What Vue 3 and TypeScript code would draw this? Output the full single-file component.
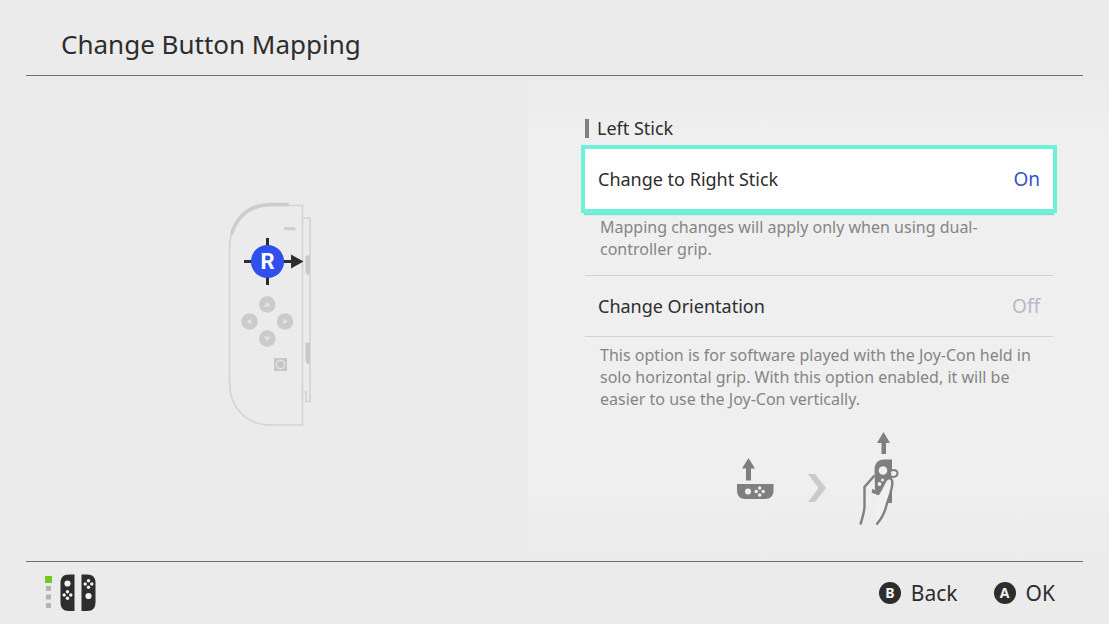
<script setup lang="ts">
import { ref } from 'vue'

interface Option {
  id: string
  label: string
  on: boolean
  lines: string[]
}

const selected = ref('stick')
const options = ref<Option[]>([
  {
    id: 'stick',
    label: 'Change to Right Stick',
    on: true,
    lines: ['Mapping changes will apply only when using dual-', 'controller grip.'],
  },
  {
    id: 'orientation',
    label: 'Change Orientation',
    on: false,
    lines: [
      'This option is for software played with the Joy-Con held in',
      'solo horizontal grip. With this option enabled, it will be',
      'easier to use the Joy-Con vertically.',
    ],
  },
])

function toggle(option: Option) {
  selected.value = option.id
  option.on = !option.on
}
</script>

<template>
  <div class="screen">
    <header class="header">
      <h1>Change Button Mapping</h1>
    </header>

    <main class="main">
      <section class="preview">
        <svg class="controller" viewBox="214 199 100 240" role="img" aria-label="Left Joy-Con">
          <g fill="none" stroke="#d3d3d3" stroke-width="1.6">
            <path d="M302.5 205.5H272C246 205.5 229.500 223 229.500 248V382C229.500 408 246 425 272 425H302.500Z" />
            <path d="M302.500 218H310V401.500H306V392H302.500" />
          </g>
          <path d="M231.500 234C238 214 252 204.500 272 204.500H289" fill="none" stroke="#cdcdcd" stroke-width="3.500" />
          <path d="M284 228.700H295.500" stroke="#cdcdcd" stroke-width="3" />
          <path d="M306 256H309.500V272L308 275L306 272ZM306 343H309.500V361L308 364L306 361Z" fill="#c8c8c8" stroke="#c8c8c8" stroke-width="1" />
          <g fill="#cbcbcb">
            <circle cx="267.300" cy="304.500" r="8.300" />
            <circle cx="249.500" cy="321.500" r="8.300" />
            <circle cx="285" cy="321.500" r="8.300" />
            <circle cx="267.300" cy="338.500" r="8.300" />
          </g>
          <g fill="#e2e2e2">
            <path d="M267.300 301.500L270.500 306.500H264Z" />
            <path d="M246.500 321.500L251.500 318.500V324.500Z" />
            <path d="M288 321.500L283 318.500V324.500Z" />
            <path d="M267.300 341.500L270.500 336.500H264Z" />
          </g>
          <rect x="274" y="358" width="13" height="13" fill="#c6c6c6" />
          <circle cx="280.500" cy="364.500" r="4.200" fill="#c6c6c6" stroke="#e2e2e2" stroke-width="1.400" />
          <path d="M267.500 238V285M244 261.500H293" stroke="#2d2d2d" stroke-width="3" />
          <path d="M291 254.500L303.500 261.500L291 268.500Z" fill="#2d2d2d" />
          <circle cx="267.500" cy="261.500" r="16.600" fill="#3050eb" />
          <text x="267.500" y="269" class="stick-letter">R</text>
        </svg>
      </section>

      <section class="panel">
        <h2>Left Stick</h2>
        <template v-for="option in options" :key="option.id">
          <button
            type="button"
            class="row"
            :class="{ selected: selected === option.id }"
            :aria-pressed="option.on"
            :aria-describedby="option.id + '-note'"
            @click="toggle(option)"
          >
            <span>{{ option.label }}</span>
            <span class="value" :class="{ on: option.on }">{{ option.on ? 'On' : 'Off' }}</span>
          </button>
          <p :id="option.id + '-note'" class="note">
            <span v-for="line in option.lines" :key="line">{{ line }}</span>
          </p>
        </template>

        <svg class="grip" viewBox="731 428 176 100" role="img" aria-label="Horizontal to vertical grip">
          <path d="M748.500 457L755 467.500H751V479.500H746V467.500H742Z" fill="#7f7f7f" />
          <path d="M737 483H773.500V489C773.500 495 770.500 498 765 498H745.500C740 498 737 495 737 489Z" fill="#7f7f7f" />
          <g fill="#f0f0f0">
            <circle cx="748" cy="490.500" r="3" />
            <circle cx="759.700" cy="487" r="1.700" />
            <circle cx="759.700" cy="494" r="1.700" />
            <circle cx="756.200" cy="490.500" r="1.700" />
            <circle cx="763.200" cy="490.500" r="1.700" />
          </g>
          <path d="M808 473H815L826 487L815 501H808L818.500 487Z" fill="#cacaca" />
          <path d="M883.500 431L890 442H886V453H881.500V442H877Z" fill="#7f7f7f" />
          <path d="M874.500 470C874.500 462 878 458.500 884 458.500H892V502H887V480L880 495L872 491.500V488L875 489Z" fill="#7f7f7f" />
          <circle cx="883" cy="469.500" r="4.300" fill="#f0f0f0" />
          <path d="M890 470.500C893 468 897.500 469 897.500 472.500C897.500 475.500 894.500 476.500 890.500 475.500Z" fill="#f0f0f0" stroke="#7f7f7f" stroke-width="2" />
          <path d="M876.500 523C882 517 884.500 512 886 506C888 498 891.500 492 892.300 483C893 476 887.500 476 885.500 480C883 485 881.500 489 878.500 493L876 504Z" fill="#f0f0f0" />
          <path d="M874.500 474.500L864.500 486V505C864.500 512 862 517 860.500 523.500" fill="none" stroke="#7f7f7f" stroke-width="2.400" />
          <path d="M872 490.500L878.500 492.500C882 487 883.500 483 885.500 479.500C888 475.500 893 477 892.300 483C891.500 492 888 498 886 506C884.500 512 882 517 876.500 523.500" fill="none" stroke="#7f7f7f" stroke-width="2.400" />
          <circle cx="882.500" cy="479" r="1.500" fill="#f0f0f0" />
          <circle cx="879.500" cy="483" r="1.900" fill="#f0f0f0" />
        </svg>
      </section>
    </main>

    <footer class="footer">
      <svg class="player" viewBox="44 572 54 42" role="img" aria-label="Player 1, dual Joy-Con">
        <rect x="45" y="576" width="7" height="7" fill="#76c81c" />
        <g fill="#b4b4b4">
          <rect x="46" y="586" width="5" height="5" />
          <rect x="46" y="594.500" width="5" height="5" />
          <rect x="46" y="603" width="5" height="5" />
        </g>
        <path d="M74.500 574.500H69C63 574.500 60.500 577.500 60.500 583V602C60.500 608 63 611 69 611H74.500Z" fill="#2d2d2d" />
        <path d="M81.500 574.500H87C93 574.500 95.500 577.500 95.500 583V602C95.500 608 93 611 87 611H81.500Z" fill="#2d2d2d" />
        <g fill="#f2f2f2">
          <circle cx="67.500" cy="583.500" r="3.100" />
          <circle cx="67.500" cy="591.700" r="1.700" />
          <circle cx="67.500" cy="598.300" r="1.700" />
          <circle cx="64.200" cy="595" r="1.700" />
          <circle cx="70.800" cy="595" r="1.700" />
          <circle cx="88.500" cy="596" r="3.100" />
          <circle cx="88.500" cy="580.700" r="1.700" />
          <circle cx="88.500" cy="587.300" r="1.700" />
          <circle cx="85.200" cy="584" r="1.700" />
          <circle cx="91.800" cy="584" r="1.700" />
        </g>
      </svg>
      <nav class="actions">
        <button type="button"><span class="key">B</span>Back</button>
        <button type="button"><span class="key">A</span>OK</button>
      </nav>
    </footer>
  </div>
</template>

<style>
body {
  margin: 0;
  background: #ebebeb;
}
</style>

<style scoped>
.screen {
  box-sizing: border-box;
  min-height: 100vh;
  display: flex;
  flex-direction: column;
  background: #ebebeb;
  color: #2d2d2d;
  font-family: "Noto Sans", "Open Sans", sans-serif;
}
button {
  border: 0;
  padding: 0;
  background: none;
  color: inherit;
  font: inherit;
  cursor: pointer;
}
.header {
  margin: 0 26px;
  padding: 26px 35px 13px;
  border-bottom: 1px solid #6e6e6e;
}
h1 {
  margin: 0;
  font-size: 26px;
  line-height: 36px;
  font-weight: 400;
}
.main {
  flex: 1;
  display: grid;
  grid-template-columns: 528fr 581fr;
}
.preview {
  display: flex;
  align-items: center;
  justify-content: center;
}
.controller {
  width: 100px;
}
.stick-letter {
  fill: #fff;
  font-family: Roboto, sans-serif;
  font-size: 22px;
  font-weight: 700;
  text-anchor: middle;
}
.panel {
  display: flex;
  flex-direction: column;
  padding: 43px 56px 0 57px;
  background: linear-gradient(#ebebeb, #efefef 60px, #efefef calc(100% - 80px), #ebebeb);
}
h2 {
  margin: 0 0 11px;
  padding-left: 8px;
  border-left: 4px solid #808080;
  font-size: 18px;
  line-height: 19px;
  font-weight: 400;
}
.row {
  display: flex;
  align-items: center;
  justify-content: space-between;
  height: 62px;
  padding: 0 13px;
  font-size: 18px;
  border-top: 1px solid #d3d3d3;
  border-bottom: 1px solid #d3d3d3;
}
.row.selected {
  height: 60px;
  border-color: #fff;
  background: #fff;
  outline: 4px solid #70f0d8;
  box-shadow: 0 5px 1px 1px #70e8d4;
}
.value {
  color: #b5b9c4;
  font-size: 19px;
}
.value.on {
  color: #3850c8;
}
.note {
  margin: 0;
  padding: 7px 0 15px 15px;
  color: #858585;
  font-size: 16px;
  line-height: 22px;
}
.note span {
  display: block;
}
.grip {
  width: 176px;
  margin: 4px auto 0;
}
.footer {
  display: flex;
  align-items: center;
  justify-content: space-between;
  height: 62px;
  margin: 0 26px;
  padding: 0 28px 0 18px;
  border-top: 1px solid #6e6e6e;
}
.player {
  width: 54px;
}
.actions {
  display: flex;
  gap: 36px;
}
.actions button {
  display: flex;
  align-items: center;
  gap: 10px;
  font-size: 21px;
  line-height: 30px;
}
.key {
  width: 22px;
  height: 22px;
  border-radius: 50%;
  background: #2d2d2d;
  color: #f2f2f2;
  font-size: 14px;
  line-height: 22px;
  font-weight: 700;
  text-align: center;
}
</style>
